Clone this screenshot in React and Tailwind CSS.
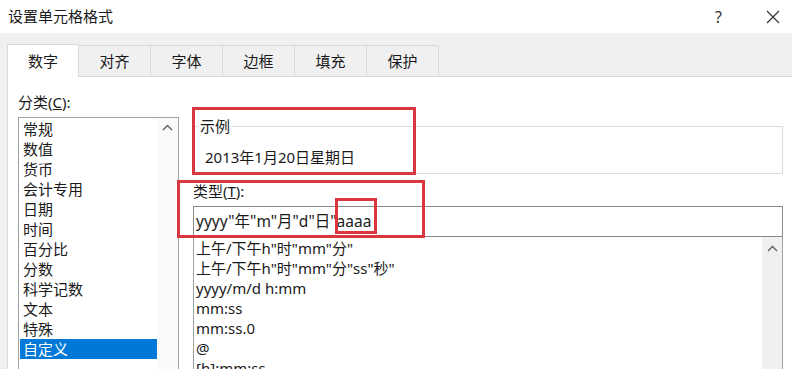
import React from 'react';

const FONT = { fontFamily: '"Noto Sans", "Noto Sans CJK SC", sans-serif' };

const categories = ['常规', '数值', '货币', '会计专用', '日期', '时间', '百分比', '分数', '科学记数', '文本', '特殊', '自定义'];
const formats = [
  '上午/下午h"时"mm"分"',
  '上午/下午h"时"mm"分"ss"秒"',
  'yyyy/m/d h:mm',
  'mm:ss',
  'mm:ss.0',
  '@',
  '[h]:mm:ss',
];
const tabs = ['数字', '对齐', '字体', '边框', '填充', '保护'];

function Chevron() {
  return (
    <svg width="11" height="7" viewBox="0 0 11 7" className="text-[#606060]">
      <path d="M1 6 L5.5 1.5 L10 6" fill="none" stroke="currentColor" strokeWidth="1.4" />
    </svg>
  );
}

export default function App() {
  return (
    <div style={FONT} className="relative w-[792px] h-[369px] overflow-hidden bg-[#f0f0f0] text-[#1a1a1a] flex flex-col">
      {/* title bar */}
      <div className="h-[33px] bg-white flex items-center justify-between pl-[8px] pr-[12px] shrink-0">
        <span className="text-[15px]">设置单元格格式</span>
        <div className="flex items-center gap-[44px]">
          <span className="text-[16px] text-[#333]">?</span>
          <svg width="14" height="14" viewBox="0 0 14 14">
            <path d="M1 1 L13 13 M13 1 L1 13" stroke="#333" strokeWidth="1.2" />
          </svg>
        </div>
      </div>

      {/* tabs */}
      <div className="flex items-end pl-[7px] pt-[11px] shrink-0">
        {tabs.map((t, i) =>
          i === 0 ? (
            <div key={t} className="w-[72px] h-[33px] bg-white border border-b-0 border-[#d9d9d9] flex items-center justify-center text-[15px] -mb-px relative z-10">
              {t}
            </div>
          ) : (
            <div key={t} className="w-[72px] h-[31px] bg-[#f0f0f0] border border-l-0 border-b-0 border-[#d9d9d9] flex items-center justify-center text-[15px]">
              {t}
            </div>
          )
        )}
      </div>

      {/* panel */}
      <div className="ml-[7px] flex-1 bg-white border-t border-l border-[#d9d9d9] flex pl-[10px] pt-[15px] gap-[14px]">
        {/* category */}
        <div className="w-[161px] flex flex-col">
          <div className="h-[20px] leading-[20px] text-[15px]">分类(<span className="underline">C</span>):</div>
          <div className="mt-[5px] flex-1 border border-[#a0a0a0] border-b-0 flex">
            <div className="flex-1 pt-[1px] pl-[1px]">
              {categories.map(c => (
                <div key={c} className={`h-[20px] leading-[20px] text-[15px] pl-[3px] ${c === '自定义' ? 'bg-[#0078d7] text-white' : ''}`}>
                  {c}
                </div>
              ))}
            </div>
            <div className="w-[21px] bg-[#fafafa] flex justify-center pt-[6px]">
              <Chevron />
            </div>
          </div>
        </div>

        {/* right */}
        <div className="flex-1 flex flex-col pr-[9px]">
          <div className="relative mt-[34px] h-[48px] border border-[#dcdcdc] ml-[1px] shrink-0">
            <span className="absolute -top-[11px] left-[4px] bg-white px-[1px] text-[15px] leading-[20px]">示例</span>
            <div className="pt-[20px] pl-[10px] text-[15px] leading-[20px]">2013年1月20日星期日</div>
          </div>
          <div className="mt-[7px] h-[20px] leading-[20px] text-[15px] shrink-0">类型(<span className="underline">T</span>):</div>
          <div className="mt-[5px] h-[31px] border border-[#8a8a8a] flex items-center pl-[2px] text-[15.5px] shrink-0">
            yyyy"年"m"月"d"日"aaaa
          </div>
          <div className="flex-1 border border-t-0 border-b-0 border-[#a0a0a0] flex">
            <div className="flex-1 pl-[2px] pt-[1px]">
              {formats.map(f => (
                <div key={f} className="h-[20px] leading-[20px] text-[15px] whitespace-nowrap">{f}</div>
              ))}
            </div>
            <div className="w-[20px] bg-[#f0f0f0] flex justify-center pt-[8px]">
              <Chevron />
            </div>
          </div>
        </div>
      </div>

      {/* red annotation boxes */}
      <div className="absolute left-[192px] top-[107px] w-[224px] h-[68px] border-[3px] border-[#d9363e] pointer-events-none" />
      <div className="absolute left-[177px] top-[180px] w-[248px] h-[58px] border-[3px] border-[#d9363e] pointer-events-none" />
      <div className="absolute left-[335px] top-[198px] w-[42px] h-[36px] border-[3px] border-[#d9363e] pointer-events-none" />
    </div>
  );
}
